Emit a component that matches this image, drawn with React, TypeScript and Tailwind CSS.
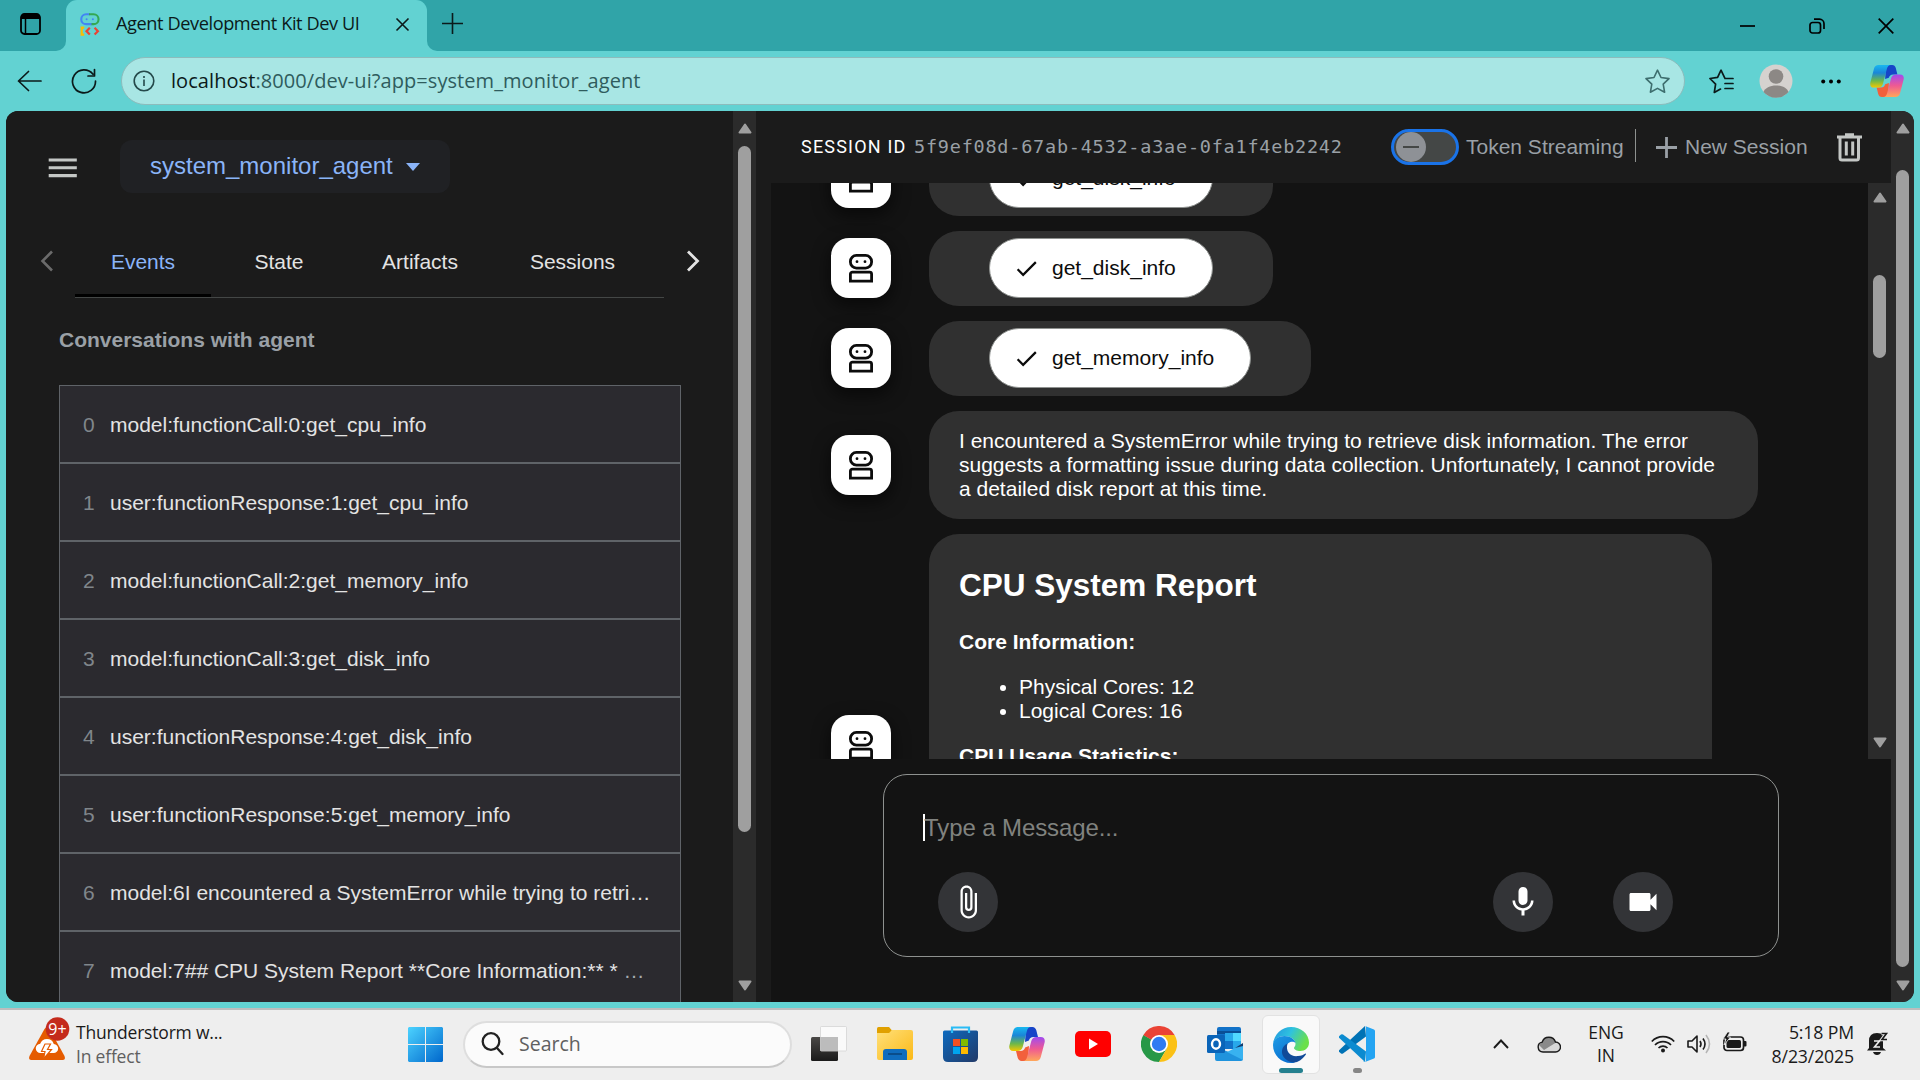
import React from "react";
import { MdMenu, MdMic, MdVideocam, MdAttachFile, MdCheck } from "react-icons/md";

const ARIAL = "font-['Liberation_Sans',Arial,sans-serif]";
const UI = "font-['Open_Sans','Noto_Sans',sans-serif]";

const events = [
  "model:functionCall:0:get_cpu_info",
  "user:functionResponse:1:get_cpu_info",
  "model:functionCall:2:get_memory_info",
  "model:functionCall:3:get_disk_info",
  "user:functionResponse:4:get_disk_info",
  "user:functionResponse:5:get_memory_info",
  "model:6I encountered a SystemError while trying to retri…",
  "model:7## CPU System Report **Core Information:** * ",
];

function AdkIcon() {
  return (
    <svg width="20" height="23" viewBox="0 0 20 23" fill="none" className="shrink-0">
      <path d="M10 1.200H6.200a4.800 4.800 0 0 0 0 9.900H12" stroke="#4285f4" strokeWidth="2.100" />
      <path d="M9 1.200h4.600a4.900 4.900 0 0 1 0 9.900H11.500" stroke="#34a853" strokeWidth="2.100" />
      <circle cx="6.600" cy="6.200" r="1" fill="#4285f4" />
      <circle cx="12.900" cy="6.200" r="1" fill="#4285f4" />
      <path d="M4.200 14.700H1.700v6.900h2.500" stroke="#fbbc04" strokeWidth="2.200" />
      <path d="M9.800 14.800l-3.300 3.400 3.300 3.400M14.600 14.800l3.300 3.400-3.300 3.400" stroke="#ea4335" strokeWidth="2.200" />
    </svg>
  );
}

function Copilot({ id, size = 36 }: { id: string; size?: number }) {
  return (
    <svg width={size} height={size} viewBox="0 0 36 36" className="shrink-0">
      <defs>
        <linearGradient id={id + "a"} x1="0" y1="0" x2="0" y2="1">
          <stop offset="0" stopColor="#18b8f0" />
          <stop offset=".35" stopColor="#1a86d8" />
          <stop offset=".7" stopColor="#6db84a" />
          <stop offset="1" stopColor="#f5c800" />
        </linearGradient>
        <linearGradient id={id + "b"} x1="0" y1="0" x2="0" y2="1">
          <stop offset="0" stopColor="#a04af0" />
          <stop offset=".5" stopColor="#ef5a92" />
          <stop offset="1" stopColor="#ffa85a" />
        </linearGradient>
      </defs>
      <path d="M17 1h6.500c2 0 3.200 1.300 3.800 3.200L29 11h-4.500c-2.600 0-4 1.400-4.600 3.500L16 16z" fill="#1745c8" />
      <path d="M19 35h-6.500c-2 0-3.200-1.300-3.800-3.200L7 25h4.500c2.600 0 4-1.400 4.600-3.500L20 20z" fill="#f2603c" />
      <path d="M9 1h13c-2.200 0-3.400 1.500-4.100 4l-4.200 16c-.9 2.800-2.400 4-5.200 4H4.200C.9 25-.3 22.500.4 19.500L4.200 5C4.900 2.300 6.500 1 9 1z" fill={`url(#${id}a)`} />
      <path d="M27 35H14c2.200 0 3.400-1.500 4.100-4l4.200-16c.9-2.800 2.400-4 5.200-4h4.300c3.300 0 4.500 2.500 3.800 5.500L31.800 31c-.7 2.700-2.300 4-4.800 4z" fill={`url(#${id}b)`} />
    </svg>
  );
}

function Star({ list = false }: { list?: boolean }) {
  return list ? (
    <svg width="25" height="25" viewBox="0 0 25 25" fill="none" stroke="#0b1a1a" strokeWidth="1.7" strokeLinejoin="round" strokeLinecap="round">
      <path d="M15.600 8.600L12 1.200 8.600 8.400.9 9.500l5.700 5.600L5.300 23.500l6.200-3.400" />
      <path d="M16 9.500h8M16 14.500h8M16 19.500h8" />
    </svg>
  ) : (
    <svg width="25" height="25" viewBox="0 0 25 25" fill="none" stroke="#3e6e6e" strokeWidth="1.6" strokeLinejoin="round">
      <path d="M12.500 1.200l3.500 7.300 8 1.100-5.800 5.600 1.400 8-7.100-3.800-7.100 3.800 1.400-8L1 9.600l8-1.100z" />
    </svg>
  );
}

function Browser() {
  return (
    <header className={`${UI} flex shrink-0 flex-col`}>
      <div className="flex h-[51px] bg-[#62d2d2]">
        <div className="flex w-[66px] items-center justify-start rounded-br-[10px] bg-[#30a4a8] pb-[3px] pl-5">
          <svg width="21" height="22" viewBox="0 0 21 22" fill="none">
            <rect x="1" y="1" width="19" height="20" rx="3.500" stroke="#000" strokeWidth="1.800" />
            <path d="M1 6V4a3 3 0 0 1 3-3h13a3 3 0 0 1 3 3v2z" fill="#000" />
            <path d="M5.500 6v15" stroke="#000" strokeWidth="1.500" />
          </svg>
        </div>
        <div className="flex w-[361px] items-center bg-[#30a4a8]">
          <div className="flex h-full w-full items-center rounded-t-[11px] bg-[#62d2d2] pb-[2px] pl-[14px] pr-4">
            <AdkIcon />
            <span className="-mt-[2px] ml-[16px] w-[264px] whitespace-nowrap text-[18.2px] tracking-[-0.42px] text-[#0b1a1a]">Agent Development Kit Dev UI</span>
            <svg width="15" height="15" viewBox="0 0 15 15" stroke="#0b1a1a" strokeWidth="1.600" className="ml-[15px] shrink-0">
              <path d="M1.500 1.500l12 12M13.500 1.500l-12 12" />
            </svg>
          </div>
        </div>
        <div className="flex flex-1 items-center rounded-bl-[10px] bg-[#30a4a8] pl-[15px]">
          <svg width="21" height="21" viewBox="0 0 21 21" stroke="#0b1a1a" strokeWidth="1.600" className="-mt-1"><path d="M10.500 0v21M0 10.500h21" /></svg>
        </div>
        <div className="flex items-center bg-[#30a4a8] pr-[26px]">
          <svg width="15" height="16" viewBox="0 0 15 16" stroke="#000" strokeWidth="1.700"><path d="M0 8h15" /></svg>
          <svg width="16" height="16" viewBox="0 0 16 16" fill="none" stroke="#000" strokeWidth="1.700" className="ml-[54px]">
            <rect x="1" y="4.500" width="10.500" height="10.500" rx="2.500" />
            <path d="M5 1.200h5.500a4.500 4.500 0 0 1 4.500 4.500V11" />
          </svg>
          <svg width="16" height="16" viewBox="0 0 16 16" stroke="#000" strokeWidth="1.700" className="ml-[53px]"><path d="M.7.700l14.600 14.600M15.300.700L.7 15.300" /></svg>
        </div>
      </div>
      <div className="flex h-[60px] items-center bg-[#62d2d2] pl-[17px] pr-[15px]">
        <svg width="25" height="22" viewBox="0 0 25 22" fill="none" stroke="#0b1a1a" strokeWidth="1.700" strokeLinecap="round" strokeLinejoin="round" className="shrink-0"><path d="M24 11H1.500M11.500 1.500L1.500 11l10 9.500" /></svg>
        <svg width="26" height="26" viewBox="0 0 26 26" fill="none" stroke="#0b1a1a" strokeWidth="1.700" strokeLinecap="round" strokeLinejoin="round" className="ml-[29px] shrink-0"><path d="M24.500 13A11.500 11.500 0 1 1 22 6.200M23.500 1.500V8H17" /></svg>
        <div className="ml-[24px] flex h-12 w-[1564px] shrink-0 items-center rounded-full border border-[#8cbcbc] bg-[#a8e6e4] pl-3 pr-[14px]">
          <svg width="22" height="22" viewBox="0 0 22 22" fill="none" stroke="#24494a" strokeWidth="1.600" className="-ml-px"><circle cx="11" cy="11" r="9.800" /><path d="M11 9.500V16M11 6v2" /></svg>
          <span className="ml-4 flex-1 text-[20px] tracking-[0.070px] text-[#2f5c5d]"><span className="text-[#0b1a1a]">localhost</span>:8000/dev-ui?app=system_monitor_agent</span>
          <Star />
        </div>
        <span className="ml-[24px] shrink-0"><Star list /></span>
        <svg width="34" height="34" viewBox="0 0 34 34" className="ml-[25px] shrink-0">
          <circle cx="17" cy="17" r="16.500" fill="#d5d2cf" />
          <circle cx="17" cy="12.500" r="7.300" fill="#8c8885" />
          <path d="M4.500 28C6 24 11 21.500 17 21.500S28 24 29.500 28A16.500 16.500 0 0 1 4.500 28z" fill="#8c8885" />
        </svg>
        <svg width="20" height="5" viewBox="0 0 20 5" className="ml-[28px] shrink-0"><circle cx="2.200" cy="2.500" r="2" /><circle cx="10" cy="2.500" r="2" /><circle cx="17.800" cy="2.500" r="2" /></svg>
        <span className="ml-[29px] shrink-0"><Copilot id="bar" size={34} /></span>
      </div>
    </header>
  );
}

function Arrow({ down = false }: { down?: boolean }) {
  return (
    <svg width="14" height="11" viewBox="0 0 14 11" className={down ? "shrink-0 rotate-180" : "shrink-0"}>
      <path d="M7 1.500l5.500 8h-11z" fill="#9f9f9f" stroke="#9f9f9f" strokeWidth="2" strokeLinejoin="round" />
    </svg>
  );
}

function Sidebar() {
  return (
    <aside className="flex w-[727px] shrink-0 flex-col overflow-hidden bg-[#1b1b1b]">
      <div className="mt-[29px] flex items-center">
        <MdMenu size={37.5} color="#c4c7c5" className="ml-[38px] mt-[3px]" />
        <div className="ml-[38.500px] flex h-[53px] w-[330px] items-center rounded-xl bg-[#202124] pl-[30px] text-[24px] text-[#8ab4f8]">
          <span className="-mt-[2px]">system_monitor_agent</span>
          <svg width="14" height="8" viewBox="0 0 14 8" className="ml-[13px]"><path d="M0 0h14L7 8z" fill="#8ab4f8" /></svg>
        </div>
      </div>
      <div className="mt-[33px] flex h-[72px] items-start text-[21px] text-[#e3e3e3]">
        <svg width="14" height="22" viewBox="0 0 14 22" fill="none" stroke="#6b6b6b" strokeWidth="2.600" className="ml-[34px] mt-6"><path d="M12 1.500L2.500 11l9.500 9.500" /></svg>
        <nav className="ml-[21px] flex h-[72px] w-[589px] border-b border-[#444746] leading-[71px]">
          <span className="h-[71px] w-[136px] border-b-[3px] border-black text-center leading-[71px] text-[#8ab4f8]">Events</span>
          <span className="w-[136px] text-center">State</span>
          <span className="w-[146px] text-center">Artifacts</span>
          <span className="w-[159px] text-center">Sessions</span>
        </nav>
        <svg width="14" height="22" viewBox="0 0 14 22" fill="none" stroke="#e3e3e3" strokeWidth="2.800" className="ml-[22px] mt-6"><path d="M2 1.500L11.500 11 2 20.500" /></svg>
      </div>
      <h2 className="ml-[53px] mt-[30px] text-[21px] font-bold leading-6 text-[#9aa0a6]">Conversations with agent</h2>
      <ul className="ml-[53px] mt-[33px] w-[622px]">
        {events.map((e, i) => (
          <li key={i} className="flex h-[78px] items-center border border-[#5f6368] bg-[#2b2a2f] pl-[23px] pt-[2px] text-[21px] text-[#80868b]">
            <span className="w-[27px] shrink-0">{i}</span>
            <span className="whitespace-pre text-[#e3e3e3]">{e}</span>
            {i === 7 && <span className="text-[#a5aab0]">…</span>}
          </li>
        ))}
      </ul>
    </aside>
  );
}

function Avatar({ raised = false }: { raised?: boolean }) {
  return (
    <div className={`flex size-[60px] shrink-0 items-center justify-center rounded-[18px] bg-white shadow-[0_6px_16px_2px_rgba(0,0,0,0.5)] ${raised ? "-mt-px" : ""}`}>
      <svg width="24" height="29" viewBox="0 0 24 29" fill="none" stroke="#0c0c0c" strokeWidth="2.800">
        <rect x="1.400" y="1.400" width="21.200" height="12.700" rx="6" />
        <path d="M1.400 27.100v-7a2 2 0 0 1 2-2h17.200a2 2 0 0 1 2 2v7z" />
        <circle cx="8" cy="7.700" r="1.400" fill="#0c0c0c" stroke="none" />
        <circle cx="16" cy="7.700" r="1.400" fill="#0c0c0c" stroke="none" />
      </svg>
    </div>
  );
}

function Row({ children, raised = false }: { children: React.ReactNode; raised?: boolean }) {
  return <div className="mb-[15px] flex items-center gap-[38px] pl-[60px]"><Avatar raised={raised} />{children}</div>;
}

function ToolRow({ name }: { name: string }) {
  return (
    <Row raised>
      <div className="flex h-[75px] items-center rounded-[30px] bg-[#303030] px-[60px]">
        <div className="-mt-px flex h-[60px] items-center rounded-[30px] border border-[#8e918f] bg-white pl-[23px] pr-[36px] text-[21px] text-[#0c0c0c]">
          <MdCheck size={27} />
          <span className="ml-[12px]">{name}</span>
        </div>
      </div>
    </Row>
  );
}

function Chat() {
  return (
    <main className="flex min-w-0 flex-1 flex-col bg-[#1b1b1b]">
      <div className="flex h-[72px] shrink-0 items-center pl-[45px] text-[21px] text-[#9aa0a6]">
        <span className="-mt-[2px] w-[113px] shrink-0 whitespace-nowrap font-['Roboto',sans-serif] text-[18px] tracking-[1.200px] text-white">SESSION ID</span>
        <span className="w-[477px] shrink-0 whitespace-nowrap font-['DejaVu_Sans_Mono',monospace] text-[18.500px] tracking-[0.770px]">5f9ef08d-67ab-4532-a3ae-0fa1f4eb2242</span>
        <div className="flex h-9 w-[68px] shrink-0 items-center rounded-full border-[3px] border-[#1a73e8] bg-[#444746] pl-[2px]">
          <div className="flex size-[30px] items-center justify-center rounded-full bg-[#8e9196]"><div className="h-[2px] w-4 bg-[#444746]" /></div>
        </div>
        <span className="ml-[7px] w-[169px] shrink-0 whitespace-nowrap">Token Streaming</span>
        <div className="-mt-[3px] h-[33px] w-px shrink-0 bg-[#8e918f]" />
        <svg width="21" height="21" viewBox="0 0 21 21" stroke="#9aa0a6" strokeWidth="2.800" className="ml-5 shrink-0"><path d="M10.500 0v21M0 10.500h21" /></svg>
        <span className="ml-2 w-[152px] shrink-0 whitespace-nowrap">New Session</span>
        <svg width="25" height="29" viewBox="0 0 25 29" fill="none" stroke="#c4c7c5" strokeWidth="3" className="shrink-0">
          <path d="M0 4h25M8 1.800h9M3 4v21a2 2 0 0 0 2 2h14.500a2 2 0 0 0 2-2V4M9.300 8.500v14M15.700 8.500v14" />
        </svg>
      </div>
      <div className="ml-[15px] flex flex-1 flex-col bg-[#131313]">
        <div className="flex h-[576px] shrink-0">
          <section className="flex h-full w-[1097px] flex-col overflow-hidden text-[21px] leading-6 text-white">
            <div className="-mt-[42px]">
              <ToolRow name="get_disk_info" />
              <ToolRow name="get_disk_info" />
              <ToolRow name="get_memory_info" />
              <Row>
                <div className="h-[108px] w-[829px] rounded-[30px] bg-[#303030] px-[30px] pt-[18px]">
                  I encountered a SystemError while trying to retrieve disk information. The error<br />
                  suggests a formatting issue during data collection. Unfortunately, I cannot provide<br />
                  a detailed disk report at this time.
                </div>
              </Row>
              <Row>
                <div className="h-[422px] w-[783px] rounded-[30px] bg-[#303030] px-[30px] pt-[33px]">
                  <h2 className="text-[31.5px] font-bold leading-9">CPU System Report</h2>
                  <p className="mt-[27px] font-bold">Core Information:</p>
                  <ul className="mt-[21px] list-disc pl-[60px]">
                    <li>Physical Cores: 12</li>
                    <li>Logical Cores: 16</li>
                  </ul>
                  <p className="mt-[21px] font-bold">CPU Usage Statistics:</p>
                </div>
              </Row>
            </div>
          </section>
          <div className="flex h-full w-[23px] flex-col items-center bg-[#2b2b2b] pt-[9px]">
            <Arrow />
            <div className="mt-[72px] h-[83px] w-[13px] rounded-full bg-[#9f9f9f]" />
            <div className="mt-auto pb-[11px]"><Arrow down /></div>
          </div>
        </div>
        <div className="ml-[112px] mt-[15px] h-[183px] w-[896px] shrink-0 rounded-[24px] border border-[#8e918f] px-[39px] pt-[39px]">
          <div className="flex h-[27px] items-center text-[24px] tracking-[-0.1px] text-[#80827f]"><span className="h-[27px] w-[2px] bg-white" /><span className="-ml-px">Type a Message...</span></div>
          <div className="mt-[31px] flex pl-[15px]">
            <Round><MdAttachFile size={36} /></Round>
            <Round className="ml-[495px]"><MdMic size={36} /></Round>
            <Round className="ml-[60px]"><MdVideocam size={36} /></Round>
          </div>
        </div>
      </div>
    </main>
  );
}

function Round({ children, className = "" }: { children: React.ReactNode; className?: string }) {
  return <div className={`flex size-[60px] items-center justify-center rounded-full bg-[#333437] text-white ${className}`}>{children}</div>;
}

function Weather() {
  return (
    <svg width="42" height="44" viewBox="0 0 42 44" className="-mt-[10px] shrink-0">
      <path d="M16.500 12L1.500 39Q0 43 3.500 43h31q3.500 0 2-4L21.500 12q-2.500-3.500-5 0z" fill="#e55b00" />
      <path d="M12.500 36a4.600 4.600 0 0 1-.3-9.200A7.200 7.200 0 0 1 25.800 27a4.500 4.500 0 0 1-.3 9z" fill="#fff" />
      <path d="M20 27h-3l-3.500 7.500h3.500L15.500 42l8-9.500h-4l3-5.500z" fill="#fff" stroke="#e55b00" strokeWidth="1.200" />
      <circle cx="29.500" cy="12" r="11.800" fill="#c42b1c" />
      <text x="29.500" y="17.500" textAnchor="middle" fontSize="16" fill="#fff" fontFamily="Open Sans">9+</text>
    </svg>
  );
}

function Taskbar() {
  return (
    <footer className={`${UI} flex h-[72px] shrink-0 items-center border-t-2 border-[#bdbdbd] bg-[#eee] pb-[2px] text-[#1a1a1a]`}>
      <div className="flex w-[408px] shrink-0 items-center pl-[28px]">
        <Weather />
        <div className="ml-[6px] text-[17.500px] leading-6 tracking-[-0.2px]"><div>Thunderstorm w...</div><div className="text-[#5f5f5f]">In effect</div></div>
      </div>
      <svg width="35" height="35" viewBox="0 0 35 35" className="shrink-0">
        <defs><linearGradient id="win" x1="0" y1="0" x2="1" y2="1"><stop offset="0" stopColor="#4cd3ff" /><stop offset="1" stopColor="#0067cc" /></linearGradient></defs>
        <path d="M1 0h16v17H0V1zM18 0h16l1 1v16H18zM0 18h17v17H1l-1-1zM18 18h17v16l-1 1H18z" fill="url(#win)" />
      </svg>
      <div className="ml-5 flex h-[47px] w-[329px] shrink-0 items-center rounded-full border-2 border-b-[#c8c8c8] border-x-[#dedede] border-t-[#dedede] bg-[#fbfbfb] pl-4">
        <svg width="23" height="24" viewBox="0 0 23 24" fill="none" stroke="#222" strokeWidth="2.300" strokeLinecap="round"><circle cx="10" cy="9.500" r="8.300" /><path d="M16 16l5.500 6" /></svg>
        <span className="-mt-px ml-[15px] text-[19.500px] text-[#606060]">Search</span>
      </div>
      <svg width="36" height="36" viewBox="0 0 36 36" className="ml-[19px] shrink-0">
        <defs><linearGradient id="tv" x1="0" y1="0" x2="0" y2="1"><stop offset="0" stopColor="#4a4846" /><stop offset="1" stopColor="#1a1a1a" /></linearGradient></defs>
        <rect x="0" y="11" width="27" height="24" rx="1.500" fill="url(#tv)" />
        <rect x="9.500" y=".5" width="26" height="24.500" rx="1" fill="#fafafa" stroke="#d4d4d4" strokeWidth=".8" />
        <path d="M9.500 11H27v14H9.500z" fill="#bcbcbc" />
      </svg>
      <svg width="36" height="34" viewBox="0 0 36 34" className="ml-[30px] shrink-0">
        <defs><linearGradient id="fd" x1="0" y1="0" x2="1" y2="1"><stop offset="0" stopColor="#ffe07a" /><stop offset="1" stopColor="#fbb917" /></linearGradient></defs>
        <path d="M0 1.500Q0 0 1.500 0H12l3 3.500-3 4H0z" fill="#e0a000" />
        <path d="M0 6h12l3-3h19q2 0 2 2v26q0 2-2 2H2q-2 0-2-2z" fill="url(#fd)" />
        <path d="M6 33v-8q0-3 3-3h18q3 0 3 3v8z" fill="#0f6cbd" />
        <path d="M11 27h14" stroke="#0b4a85" strokeWidth="1.800" />
      </svg>
      <svg width="35" height="36" viewBox="0 0 35 36" className="ml-[30px] shrink-0">
        <defs><linearGradient id="st" x1="0" y1="0" x2="1" y2="1"><stop offset="0" stopColor="#0d6abf" /><stop offset="1" stopColor="#223a68" /></linearGradient></defs>
        <path d="M0 6q0-1.500 1.500-1.500h32Q35 4.500 35 6v25q0 5-5 5H5q-5 0-5-5z" fill="url(#st)" />
        <path d="M9 7V1.500h17V7" fill="none" stroke="#2bbcf5" strokeWidth="2.200" />
        <path d="M10 13h7v7h-7z" fill="#f25022" /><path d="M18 13h7v7h-7z" fill="#7fba00" /><path d="M10 21h7v7h-7z" fill="#00a4ef" /><path d="M18 21h7v7h-7z" fill="#ffb900" />
      </svg>
      <span className="ml-[31px] shrink-0"><Copilot id="tb" /></span>
      <svg width="36" height="26" viewBox="0 0 36 26" className="ml-[30px] shrink-0"><rect width="36" height="26" rx="5" fill="#f00" /><path d="M14 7.500v11l9-5.500z" fill="#fff" /></svg>
      <svg width="36" height="36" viewBox="0 0 36 36" className="ml-[30px] shrink-0">
        <path d="M18 18L2.400 9A18 18 0 0 1 33.600 9z" fill="#ea4335" />
        <path d="M18 18L2.400 9A18 18 0 0 0 18 36l7.800-13.500z" fill="#279847" />
        <path d="M18 9h15.600A18 18 0 0 1 18 36l7.800-13.500z" fill="#fbc116" />
        <path d="M10.200 13.500L2.400 9 18 7.500V9z" fill="#ea4335" />
        <circle cx="18" cy="18" r="9" fill="#fff" /><circle cx="18" cy="18" r="7.200" fill="#2f7bf2" />
      </svg>
      <svg width="36" height="34" viewBox="0 0 36 34" className="ml-[30px] shrink-0">
        <path d="M10 2q0-2 2-2h20q2 0 2 2v20H10z" fill="#1272c8" />
        <path d="M10 4h24v3H10z" fill="#0a4f96" /><path d="M18 6h8v8h-8z" fill="#28a8ea" /><path d="M26 6h8v8h-8z" fill="#50d9ff" /><path d="M26 14h8v8h-8z" fill="#28a8ea" />
        <path d="M8 20l14 5 14-8v15q0 2-2 2H10q-2 0-2-2z" fill="#1f93dd" /><path d="M36 17v16L20 25z" fill="#38b2f0" /><path d="M28 21l8-5v3z" fill="#123b6d" />
        <rect y="8" width="18" height="18" rx="1.500" fill="#0a64b8" />
        <ellipse cx="9" cy="17" rx="4" ry="4.700" fill="none" stroke="#fff" strokeWidth="2.400" />
      </svg>
      <div className="ml-[19px] flex h-[59px] w-[58px] shrink-0 flex-col items-center rounded-md border border-[#e2e2e2] bg-[#f9f9f9] pt-[11px]">
        <svg width="36" height="36" viewBox="0 0 36 36" className="shrink-0">
          <defs>
            <linearGradient id="eg" x1="0" y1="0" x2="1" y2=".4"><stop offset="0" stopColor="#2294e0" /><stop offset=".5" stopColor="#2fc2df" /><stop offset="1" stopColor="#6be04a" /></linearGradient>
            <linearGradient id="eb" x1="0" y1="0" x2=".6" y2="1"><stop offset="0" stopColor="#1e9be5" /><stop offset="1" stopColor="#0a6fd0" /></linearGradient>
          </defs>
          <path d="M0 17C1 7 9 0 18 0c10 0 18 7 18 15.500 0 5.500-4 8.500-8.500 8.500-4 0-6.500-1.500-6.500-3 0-1 1.500-1.500 1.500-4C22.500 12 17 9 11.500 9 6 9 1.500 12 0 17z" fill="url(#eg)" />
          <path d="M0 18C0 12 6 9 11.500 9c6 0 10.500 3.500 11 7-2-2-8-2-9.500 4-1.500 7 3 13 9 15.500-1 .5-3 .5-4 .5C8 36 0 28 0 18z" fill="url(#eb)" />
          <path d="M14.500 16.500C12 25 18 30 25 29c3 0 6-1.500 7.500-2.500 1 0 .5 1 0 1.500-3 4.500-8 7.500-11 7.500-7 0-13.500-6-12.500-12 .5-3.500 3-6 5.500-7z" fill="#114a98" />
        </svg>
        <div className="mt-[5px] h-[5px] w-6 shrink-0 rounded-full bg-[#24808f]" />
      </div>
      <div className="ml-[19px] mt-[11px] flex w-9 shrink-0 flex-col items-center">
        <svg width="36" height="36" viewBox="0 0 36 36">
          <path d="M26 0l1 10.500L4 27.500q-1 .6-2 0L.3 26q-1-1 0-2z" fill="#0072b5" />
          <path d="M.3 12q-1-1 0-2L2 8.500q1-.6 2 0l23 17L26 36z" fill="#0c8bd0" />
          <path d="M26 0l9 3.500q1 .5 1 1.500v26q0 1-1 1.500L26 36q-1.500.5-2-.5 3 1 3-1V1.500q0-1.500-1-1.500z" fill="#24a4f2" />
        </svg>
        <div className="mt-[6px] h-[5px] w-[9px] rounded-full bg-[#868686]" />
      </div>
      <svg width="16" height="10" viewBox="0 0 16 10" fill="none" stroke="#1a1a1a" strokeWidth="1.900" className="ml-[118px] shrink-0"><path d="M1 9l7-7.500L15 9" /></svg>
      <svg width="24" height="17" viewBox="0 0 24 17" className="ml-7 shrink-0">
        <path d="M6 16a5 5 0 0 1-.8-9.900A7 7 0 0 1 18.500 6a5 5 0 0 1 0 10z" fill="#d8d8d8" />
        <path d="M5 6.200A7 7 0 0 1 18.500 6l1 .3L7 14 2 9z" fill="#8a8a8a" />
        <path d="M6 16a5 5 0 0 1-.8-9.900A7 7 0 0 1 18.500 6a5 5 0 0 1 0 10z" fill="none" stroke="#1a1a1a" strokeWidth="1.400" />
      </svg>
      <div className="ml-[26px] w-[38px] shrink-0 text-center text-[17.500px] leading-[23px]"><div>ENG</div><div>IN</div></div>
      <svg width="24" height="18" viewBox="0 0 24 18" fill="none" stroke="#1a1a1a" strokeWidth="1.700" className="ml-[26px] shrink-0">
        <path d="M.8 6.500a15.500 15.500 0 0 1 22.400 0M4 10a11 11 0 0 1 16 0M7.500 13a6.500 6.500 0 0 1 9 0" /><circle cx="12" cy="15.500" r="2" fill="#1a1a1a" stroke="none" />
      </svg>
      <svg width="24" height="20" viewBox="0 0 24 20" fill="none" stroke="#1a1a1a" strokeWidth="1.600" strokeLinejoin="round" className="ml-3 shrink-0">
        <path d="M1 7h4l5-5v16l-5-5H1zM13 7q2 3 0 6M16 4.500q4 5.500 0 11" /><path d="M19 1q7 9 0 18" stroke="#b5b5b5" />
      </svg>
      <svg width="24" height="20" viewBox="0 0 24 20" className="-mt-1 ml-3 shrink-0">
        <rect x="1" y="5" width="19.500" height="13.500" rx="3" fill="none" stroke="#1a1a1a" strokeWidth="1.700" /><rect x="3.500" y="8" width="14.500" height="8" rx="1.500" fill="#1a1a1a" /><path d="M21 9h1.500q1 0 1 1v3.500q0 1-1 1H21z" fill="#1a1a1a" />
        <path d="M4.500 0L0 7h3L1 13l6.500-8H4.500L7 0z" fill="#1a1a1a" stroke="#eee" strokeWidth=".8" />
      </svg>
      <div className="ml-[17px] w-[90px] shrink-0 whitespace-nowrap text-right text-[17.700px] leading-6 tracking-[-0.15px]"><div>5:18 PM</div><div>8/23/2025</div></div>
      <svg width="22" height="24" viewBox="0 0 22 24" className="ml-[13px] shrink-0">
        <path d="M2 16V9q0-8 8-8 4 0 6 2v13l3 2.500H0z" fill="#1a1a1a" /><path d="M6 20h8q-1 3-4 3t-4-3z" fill="#1a1a1a" />
        <path d="M7 9h5.500L7.500 15h5.500" stroke="#eee" strokeWidth="1.600" fill="none" /><path d="M14.500 1.500h5L15 7.500h5" stroke="#eee" strokeWidth="3.600" fill="none" /><path d="M14.500 1.500h5L15 7.500h5" stroke="#1a1a1a" strokeWidth="1.600" fill="none" />
      </svg>
    </footer>
  );
}

export default function App() {
  return (
    <div className="flex h-[1080px] w-[1920px] flex-col overflow-hidden bg-[#62d2d2]">
      <Browser />
      <div className={`${ARIAL} mx-[6px] mb-[6px] flex h-[891px] shrink-0 overflow-hidden rounded-xl bg-[#1b1b1b]`}>
        <Sidebar />
        <div className="flex w-[23px] shrink-0 flex-col items-center bg-[#2b2b2b] pt-[12px]">
          <Arrow />
          <div className="mt-[12px] h-[686px] w-[13px] rounded-full bg-[#9f9f9f]" />
          <div className="mt-auto pb-[11px]"><Arrow down /></div>
        </div>
        <Chat />
        <div className="flex w-[23px] shrink-0 flex-col items-center bg-[#2b2b2b] pt-[12px]">
          <Arrow />
          <div className="mt-[36px] h-[797px] w-[13px] rounded-full bg-[#9f9f9f]" />
          <div className="mt-auto pb-[11px]"><Arrow down /></div>
        </div>
      </div>
      <Taskbar />
    </div>
  );
}
